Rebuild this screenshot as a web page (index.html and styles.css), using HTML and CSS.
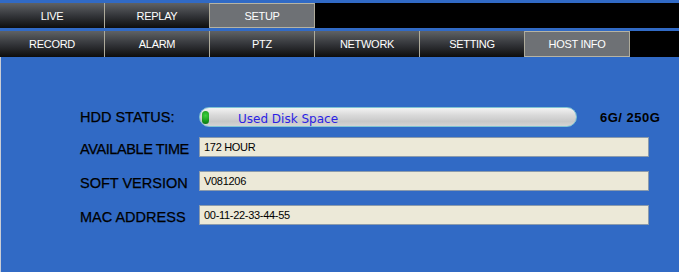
FILE: index.html
```html
<!DOCTYPE html>
<html lang="en">
<head>
  <meta charset="UTF-8" />
  <title>Host Info</title>
  <link rel="stylesheet" href="styles.css">
</head>
<body>

<div class="tabs">
  <div class="tabrow main">
    <div class="tab">LIVE</div>
    <div class="tab">REPLAY</div>
    <div class="tab active">SETUP</div>
  </div>
  <div class="tabrow sub">
    <div class="tab">RECORD</div>
    <div class="tab">ALARM</div>
    <div class="tab">PTZ</div>
    <div class="tab">NETWORK</div>
    <div class="tab">SETTING</div>
    <div class="tab active">HOST INFO</div>
  </div>
</div>

<div class="panel">
  <div class="row hdd">
    <span class="label">HDD STATUS:</span>
    <div class="disk">
      <span class="dot"></span>
      <span class="disk-text">Used Disk Space</span>
    </div>
    <span class="size">6G/ 250G</span>
  </div>
  <div class="row first">
    <span class="label tight">AVAILABLE TIME</span>
    <div class="field">172 HOUR</div>
  </div>
  <div class="row">
    <span class="label">SOFT VERSION</span>
    <div class="field">V081206</div>
  </div>
  <div class="row">
    <span class="label">MAC ADDRESS</span>
    <div class="field">00-11-22-33-44-55</div>
  </div>
</div>

</body>
</html>
```
FILE: styles.css
```css
* { margin: 0; padding: 0; box-sizing: border-box; }
html, body {
  height: 100%;
  overflow: hidden;
  background: #316ac5;
  font-family: "Liberation Sans", Arial, sans-serif;
}

/* tab bars */
.tabs {
  display: flex;
  flex-direction: column;
  gap: 3px;
  padding-top: 3px;
}

.tabrow {
  display: flex;
  background: #000;
}
.tabrow.main { height: 25px; }
.tabrow.sub { height: 26px; }

.tab {
  width: 105px;
  display: flex;
  align-items: center;
  justify-content: center;
  color: #fff;
  font-size: 11px;
  letter-spacing: -0.3px;
  background: linear-gradient(#5f6265, #34363a 50%, #0d0d0d);
  border-right: 1px solid #aeab9b;
}
.tab.active {
  background: #6e7175;
  border-top: 1px solid #b6b3a3;
  border-bottom: 1px solid #b6b3a3;
}

/* host info panel */
.panel {
  padding: 50px 0 0 79px;
  border-left: 1px solid #c9cdd6;
  height: 215px;
}

.row {
  display: flex;
  align-items: center;
  height: 20px;
  margin-top: 14px;
}
.row.hdd { margin-top: 0; }
.row.first { margin-top: 10px; }

.label {
  width: 119px;
  padding-top: 3px;
  font-size: 14.5px;
  color: #000;
  -webkit-text-stroke: 0.25px #000;
  white-space: nowrap;
}
.row.hdd .label { padding-top: 0; }
.label.tight { letter-spacing: -0.4px; }

.field {
  width: 450px;
  height: 20px;
  display: flex;
  align-items: center;
  padding-left: 4px;
  background: #ece9d8;
  border: 1px solid #8b9bac;
  font-size: 11px;
  letter-spacing: -0.3px;
  color: #000;
}

.disk {
  width: 378px;
  height: 20px;
  display: flex;
  align-items: flex-end;
  padding: 0 2px;
  border: 1px solid #7fc3d2;
  border-radius: 10px;
  background: linear-gradient(#f2f2f2, #d9d9d9 40%, #c8c8c8 75%, #d4d4d4);
}

.dot {
  align-self: center;
  width: 7px;
  height: 13px;
  border-radius: 4px;
  background: radial-gradient(circle at 50% 35%, #3fd040, #169a1c 60%, #0d6d12);
}

.disk-text {
  margin-left: 29px;
  padding-bottom: 1px;
  font-family: "DejaVu Sans", sans-serif;
  font-size: 12px;
  line-height: 1;
  color: #2b1fe4;
}

.size {
  margin-left: 23px;
  font-size: 13px;
  font-weight: bold;
  letter-spacing: 0.5px;
  color: #000;
}
```
